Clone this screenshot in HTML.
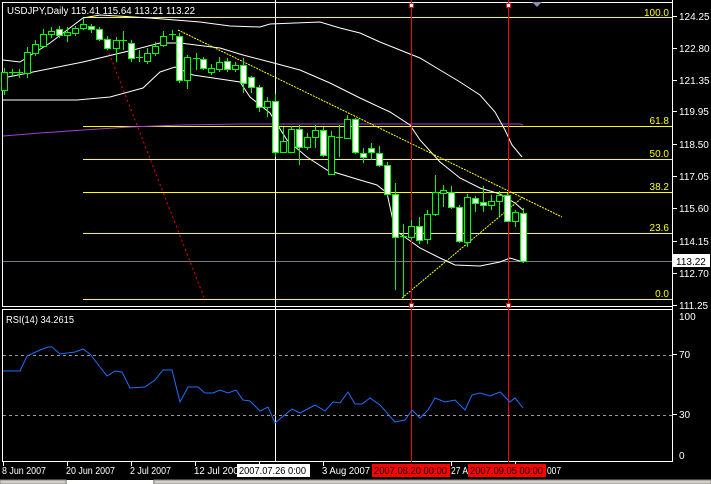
<!DOCTYPE html>
<html><head><meta charset="utf-8"><style>
html,body{margin:0;padding:0;background:#000;width:711px;height:484px;overflow:hidden}
svg{display:block}
text{font-family:"Liberation Sans",sans-serif;font-size:10px}
</style></head><body>
<svg width="711" height="484" viewBox="0 0 711 484" xmlns="http://www.w3.org/2000/svg">
<rect width="711" height="484" fill="#000"/>
<g fill="none" stroke="#fff" stroke-width="1">
<rect x="2.5" y="2.5" width="670" height="304"/>
<rect x="2.5" y="309.5" width="670" height="152"/>
<line x1="672.5" y1="0" x2="672.5" y2="462"/>
</g>
<line x1="3" y1="261.5" x2="672" y2="261.5" stroke="#778" />
<g stroke="#ff0" stroke-width="1">
<line x1="83" y1="17.5" x2="672" y2="17.5"/>
<line x1="83" y1="126.5" x2="672" y2="126.5"/>
<line x1="83" y1="159.5" x2="672" y2="159.5"/>
<line x1="83" y1="192.5" x2="672" y2="192.5"/>
<line x1="83" y1="233.5" x2="672" y2="233.5"/>
<line x1="83" y1="299.5" x2="672" y2="299.5"/>
</g>
<g fill="#ff0" text-anchor="end">
<text x="669" y="16">100.0</text>
<text x="669" y="124">61.8</text>
<text x="669" y="157">50.0</text>
<text x="669" y="190">38.2</text>
<text x="669" y="231">23.6</text>
<text x="669" y="297">0.0</text>
</g>
<polyline fill="none" stroke="#a040e0" stroke-width="1" points="3,136 40,133 83,130 130,127 180,125 240,124 400,124 520,124 523,125"/>
<g fill="none" stroke="#fff" stroke-width="1">
<polyline points="3,60 20,62 50,43 83,18 100,15 150,18 200,22 230,26 260,27 270,24 320,22 340,28 360,33 380,42 400,50 420,58 440,70 460,82 480,95 495,112 505,130 512,145 522,157"/>
<polyline points="3,78 33,72 83,62 133,50 160,43 180,43 220,48 243,55 270,62 300,70 330,83 360,98 390,112 410,125 420,140 440,162 460,178 480,188 500,194 515,203 523,210"/>
<polyline points="3,100 60,100 77,100 110,97 143,88 160,72 175,67 193,75 240,82 250,97 270,113 287,140 307,157 327,170 360,180 377,185 387,193 395,230 420,248 440,258 455,265 480,266 500,262 510,258 523,262"/>
</g>
<line x1="178" y1="30" x2="562" y2="217" stroke="#ff0" stroke-dasharray="2,1"/>
<line x1="402" y1="298" x2="523" y2="197" stroke="#ff0" stroke-dasharray="2,1"/>
<line x1="100" y1="30" x2="205" y2="300" stroke="#f00" stroke-dasharray="2,3"/>
<line x1="275.5" y1="0" x2="275.5" y2="462" stroke="#fff"/>
<line x1="411.5" y1="0" x2="411.5" y2="462" stroke="#f00"/>
<line x1="508.5" y1="0" x2="508.5" y2="462" stroke="#f00"/>
<g fill="#fff" stroke="#f00"><rect x="409.5" y="3.5" width="4" height="4"/><rect x="506.5" y="3.5" width="4" height="4"/><rect x="409.5" y="303.5" width="4" height="4"/><rect x="506.5" y="303.5" width="4" height="4"/></g>
<polygon points="532,2 542,2 537,7" fill="#8890b0"/>
<g stroke="#0f0" stroke-width="1">
<line x1="4.5" y1="68" x2="4.5" y2="95"/><rect x="1.5" y="72.5" width="6" height="18" fill="#000"/>
<line x1="12.5" y1="69" x2="12.5" y2="77"/><line x1="9" y1="72.5" x2="16" y2="72.5"/>
<line x1="19.5" y1="69" x2="19.5" y2="78"/><line x1="16" y1="72.5" x2="23" y2="72.5"/>
<line x1="27.5" y1="47" x2="27.5" y2="78"/><rect x="24.5" y="52.5" width="6" height="21" fill="#000"/>
<line x1="35.5" y1="40" x2="35.5" y2="56"/><rect x="32.5" y="44.5" width="6" height="9" fill="#000"/>
<line x1="43.5" y1="29" x2="43.5" y2="48"/><rect x="40.5" y="34.5" width="6" height="12" fill="#000"/>
<line x1="51.5" y1="27" x2="51.5" y2="38"/><rect x="48.5" y="31.5" width="6" height="3" fill="#000"/>
<line x1="59.5" y1="26" x2="59.5" y2="38"/><rect x="56.5" y="29.5" width="6" height="6" fill="#fff"/>
<line x1="67.5" y1="27" x2="67.5" y2="42"/><rect x="64.5" y="32.5" width="6" height="3" fill="#000"/>
<line x1="75.5" y1="26" x2="75.5" y2="36"/><rect x="72.5" y="28.5" width="6" height="5" fill="#000"/>
<line x1="83.5" y1="18" x2="83.5" y2="30"/><rect x="80.5" y="24.5" width="6" height="4" fill="#000"/>
<line x1="91.5" y1="24" x2="91.5" y2="33"/><rect x="88.5" y="26.5" width="6" height="3" fill="#fff"/>
<line x1="99.5" y1="27" x2="99.5" y2="41"/><rect x="96.5" y="29.5" width="6" height="10" fill="#fff"/>
<line x1="107.5" y1="36" x2="107.5" y2="50"/><rect x="104.5" y="39.5" width="6" height="9" fill="#fff"/>
<line x1="116.5" y1="37" x2="116.5" y2="62"/><rect x="113.5" y="40.5" width="6" height="8" fill="#000"/>
<line x1="123.5" y1="31" x2="123.5" y2="50"/><line x1="120" y1="40.5" x2="127" y2="40.5"/>
<line x1="131.5" y1="40" x2="131.5" y2="62"/><rect x="128.5" y="43.5" width="6" height="15" fill="#fff"/>
<line x1="139.5" y1="50" x2="139.5" y2="62"/><line x1="136" y1="57.5" x2="143" y2="57.5"/>
<line x1="147.5" y1="48" x2="147.5" y2="64"/><rect x="144.5" y="53.5" width="6" height="8" fill="#000"/>
<line x1="155.5" y1="42" x2="155.5" y2="56"/><rect x="152.5" y="46.5" width="6" height="7" fill="#000"/>
<line x1="163.5" y1="31" x2="163.5" y2="47"/><rect x="160.5" y="36.5" width="6" height="9" fill="#000"/>
<line x1="172.5" y1="30" x2="172.5" y2="40"/><line x1="169" y1="34.5" x2="176" y2="34.5"/>
<line x1="179.5" y1="33" x2="179.5" y2="83"/><rect x="176.5" y="36.5" width="6" height="44" fill="#fff"/>
<line x1="187.5" y1="55" x2="187.5" y2="89"/><rect x="184.5" y="57.5" width="6" height="23" fill="#000"/>
<line x1="196.5" y1="53" x2="196.5" y2="70"/><line x1="193" y1="58.5" x2="200" y2="58.5"/>
<line x1="203.5" y1="57" x2="203.5" y2="70"/><rect x="200.5" y="59.5" width="6" height="9" fill="#fff"/>
<line x1="211.5" y1="64" x2="211.5" y2="75"/><rect x="208.5" y="68.5" width="6" height="4" fill="#000"/>
<line x1="219.5" y1="57" x2="219.5" y2="72"/><rect x="216.5" y="62.5" width="6" height="7" fill="#000"/>
<line x1="227.5" y1="58" x2="227.5" y2="72"/><rect x="224.5" y="61.5" width="6" height="8" fill="#fff"/>
<line x1="235.5" y1="62" x2="235.5" y2="72"/><rect x="232.5" y="65.5" width="6" height="4" fill="#000"/>
<line x1="243.5" y1="58" x2="243.5" y2="93"/><rect x="240.5" y="65.5" width="6" height="18" fill="#fff"/>
<line x1="251.5" y1="76" x2="251.5" y2="93"/><rect x="248.5" y="77.5" width="6" height="10" fill="#fff"/>
<line x1="259.5" y1="85" x2="259.5" y2="112"/><rect x="256.5" y="87.5" width="6" height="20" fill="#fff"/>
<line x1="267.5" y1="97" x2="267.5" y2="117"/><rect x="264.5" y="101.5" width="6" height="6" fill="#000"/>
<line x1="275.5" y1="94" x2="275.5" y2="157"/><rect x="272.5" y="101.5" width="6" height="51" fill="#fff"/>
<line x1="283.5" y1="127" x2="283.5" y2="153"/><rect x="280.5" y="141.5" width="6" height="11" fill="#000"/>
<line x1="291.5" y1="126" x2="291.5" y2="153"/><rect x="288.5" y="129.5" width="6" height="23" fill="#000"/>
<line x1="299.5" y1="125" x2="299.5" y2="165"/><rect x="296.5" y="129.5" width="6" height="18" fill="#fff"/>
<line x1="307.5" y1="133" x2="307.5" y2="150"/><rect x="304.5" y="137.5" width="6" height="10" fill="#000"/>
<line x1="315.5" y1="125" x2="315.5" y2="148"/><rect x="312.5" y="130.5" width="6" height="7" fill="#000"/>
<line x1="323.5" y1="127" x2="323.5" y2="157"/><rect x="320.5" y="130.5" width="6" height="25" fill="#fff"/>
<line x1="331.5" y1="131" x2="331.5" y2="175"/><rect x="328.5" y="136.5" width="6" height="38" fill="#000"/>
<line x1="339.5" y1="125" x2="339.5" y2="157"/><line x1="336" y1="137.5" x2="343" y2="137.5"/>
<line x1="347.5" y1="115" x2="347.5" y2="138"/><rect x="344.5" y="119.5" width="6" height="19" fill="#000"/>
<line x1="355.5" y1="118" x2="355.5" y2="154"/><rect x="352.5" y="119.5" width="6" height="33" fill="#fff"/>
<line x1="363.5" y1="148" x2="363.5" y2="163"/><rect x="360.5" y="153.5" width="6" height="4" fill="#fff"/>
<line x1="371.5" y1="143" x2="371.5" y2="160"/><rect x="368.5" y="148.5" width="6" height="4" fill="#fff"/>
<line x1="379.5" y1="146" x2="379.5" y2="167"/><rect x="376.5" y="153.5" width="6" height="12" fill="#fff"/>
<line x1="387.5" y1="162" x2="387.5" y2="196"/><rect x="384.5" y="165.5" width="6" height="29" fill="#fff"/>
<line x1="395.5" y1="183" x2="395.5" y2="290"/><rect x="392.5" y="194.5" width="6" height="43" fill="#fff"/>
<line x1="403.5" y1="224" x2="403.5" y2="298"/><line x1="400" y1="236.5" x2="407" y2="236.5"/>
<line x1="411.5" y1="220" x2="411.5" y2="240"/><rect x="408.5" y="226.5" width="6" height="11" fill="#000"/>
<line x1="419.5" y1="217" x2="419.5" y2="244"/><rect x="416.5" y="226.5" width="6" height="14" fill="#fff"/>
<line x1="427.5" y1="210" x2="427.5" y2="244"/><rect x="424.5" y="214.5" width="6" height="25" fill="#000"/>
<line x1="435.5" y1="175" x2="435.5" y2="216"/><rect x="432.5" y="192.5" width="6" height="22" fill="#000"/>
<line x1="443.5" y1="185" x2="443.5" y2="207"/><rect x="440.5" y="190.5" width="6" height="3" fill="#000"/>
<line x1="451.5" y1="186" x2="451.5" y2="209"/><rect x="448.5" y="192.5" width="6" height="15" fill="#fff"/>
<line x1="459.5" y1="205" x2="459.5" y2="243"/><rect x="456.5" y="207.5" width="6" height="34" fill="#fff"/>
<line x1="467.5" y1="194" x2="467.5" y2="247"/><rect x="464.5" y="197.5" width="6" height="45" fill="#000"/>
<line x1="475.5" y1="196" x2="475.5" y2="212"/><rect x="472.5" y="198.5" width="6" height="5" fill="#fff"/>
<line x1="483.5" y1="186" x2="483.5" y2="212"/><rect x="480.5" y="202.5" width="6" height="3" fill="#fff"/>
<line x1="491.5" y1="195" x2="491.5" y2="210"/><rect x="488.5" y="201.5" width="6" height="4" fill="#000"/>
<line x1="499.5" y1="191" x2="499.5" y2="216"/><rect x="496.5" y="195.5" width="6" height="6" fill="#000"/>
<line x1="507.5" y1="193" x2="507.5" y2="222"/><rect x="504.5" y="195.5" width="6" height="26" fill="#fff"/>
<line x1="515.5" y1="210" x2="515.5" y2="227"/><rect x="512.5" y="212.5" width="6" height="9" fill="#000"/>
<line x1="523.5" y1="208" x2="523.5" y2="263"/><rect x="520.5" y="213.5" width="6" height="48" fill="#fff"/>
</g>
<text x="7" y="14" fill="#fff" textLength="188" lengthAdjust="spacingAndGlyphs">USDJPY,Daily  115.41 115.64 113.21 113.22</text>
<g stroke="#fff"><line x1="673" y1="16.5" x2="677" y2="16.5"/><line x1="673" y1="48.5" x2="677" y2="48.5"/><line x1="673" y1="80.5" x2="677" y2="80.5"/><line x1="673" y1="111.5" x2="677" y2="111.5"/><line x1="673" y1="144.5" x2="677" y2="144.5"/><line x1="673" y1="176.5" x2="677" y2="176.5"/><line x1="673" y1="208.5" x2="677" y2="208.5"/><line x1="673" y1="241.5" x2="677" y2="241.5"/><line x1="673" y1="273.5" x2="677" y2="273.5"/><line x1="673" y1="305.5" x2="677" y2="305.5"/>
<line x1="673" y1="354.5" x2="677" y2="354.5"/><line x1="673" y1="414.5" x2="677" y2="414.5"/></g>
<g fill="#fff">
<text x="679" y="20">124.25</text><text x="679" y="52">122.80</text><text x="679" y="84">121.35</text><text x="679" y="115">119.95</text><text x="679" y="148">118.50</text><text x="679" y="180">117.05</text><text x="679" y="212">115.60</text><text x="679" y="245">114.15</text><text x="679" y="277">112.70</text><text x="679" y="309">111.25</text>
<text x="679" y="320">100</text><text x="679" y="358">70</text><text x="679" y="418">30</text><text x="679" y="459">0</text>
</g>
<rect x="673" y="254" width="37" height="13" fill="#fff"/>
<text x="676" y="265" fill="#000">113.22</text>
<g stroke="#999" stroke-dasharray="3,3"><line x1="3" y1="355.5" x2="672" y2="355.5"/><line x1="3" y1="415.5" x2="672" y2="415.5"/></g>
<text x="6" y="323" fill="#fff" textLength="68" lengthAdjust="spacingAndGlyphs">RSI(14) 34.2615</text>
<polyline fill="none" stroke="#1e6fff" stroke-width="1" points="3,371 20,371 27,356 40,350 48,347 52,347 60,354 75,352 83,349 90,354 100,367 107,376 115,371 122,372 130,388 145,387 155,380 163,370 172,370 180,402 188,387 198,387 205,393 213,393 220,390 228,393 236,390 243,400 250,401 260,411 268,407 275,423 292,409 300,413 315,405 325,411 333,402 340,403 348,392 355,404 362,404 370,398 380,405 395,422 405,420 412,410 420,418 428,410 435,398 445,402 455,400 465,410 472,395 480,393 490,396 500,392 510,402 515,398 523,408"/>
<g stroke="#fff"><line x1="3.5" y1="462" x2="3.5" y2="466"/><line x1="67.5" y1="462" x2="67.5" y2="466"/><line x1="131.5" y1="462" x2="131.5" y2="466"/><line x1="195.5" y1="462" x2="195.5" y2="466"/><line x1="259.5" y1="462" x2="259.5" y2="466"/><line x1="323.5" y1="462" x2="323.5" y2="466"/><line x1="451.5" y1="462" x2="451.5" y2="466"/><line x1="515.5" y1="462" x2="515.5" y2="466"/></g>
<g fill="#fff">
<text x="2" y="474" textLength="44" lengthAdjust="spacingAndGlyphs">8 Jun 2007</text>
<text x="66" y="474" textLength="49" lengthAdjust="spacingAndGlyphs">20 Jun 2007</text>
<text x="130" y="474" textLength="41" lengthAdjust="spacingAndGlyphs">2 Jul 2007</text>
<text x="194" y="474" textLength="50" lengthAdjust="spacingAndGlyphs">12 Jul 2007</text>
<text x="322" y="474" textLength="48" lengthAdjust="spacingAndGlyphs">3 Aug 2007</text>
<text x="451" y="474" textLength="17" lengthAdjust="spacingAndGlyphs">27 A</text>
<text x="547" y="474" textLength="14" lengthAdjust="spacingAndGlyphs">007</text>
</g>
<rect x="237" y="464" width="73" height="13" fill="#fff"/><text x="239" y="474" fill="#000" textLength="67" lengthAdjust="spacingAndGlyphs">2007.07.26 0:00</text>
<rect x="372" y="464" width="78" height="13" fill="#f00"/><text x="374" y="474" fill="#000" textLength="73" lengthAdjust="spacingAndGlyphs">2007.08.20 00:00</text>
<rect x="468" y="464" width="78" height="13" fill="#f00"/><text x="470" y="474" fill="#000" textLength="73" lengthAdjust="spacingAndGlyphs">2007.09.05 00:00</text>
<rect x="0" y="480" width="711" height="4" fill="#c0c0c0"/>
<rect x="0" y="480" width="66" height="4" fill="#d4d0c8" stroke="#888"/>
<rect x="67" y="480" width="86" height="4" fill="#fff"/>
<rect x="154" y="480" width="557" height="4" fill="#d4d0c8" stroke="#888"/>
</svg>
</body></html>
